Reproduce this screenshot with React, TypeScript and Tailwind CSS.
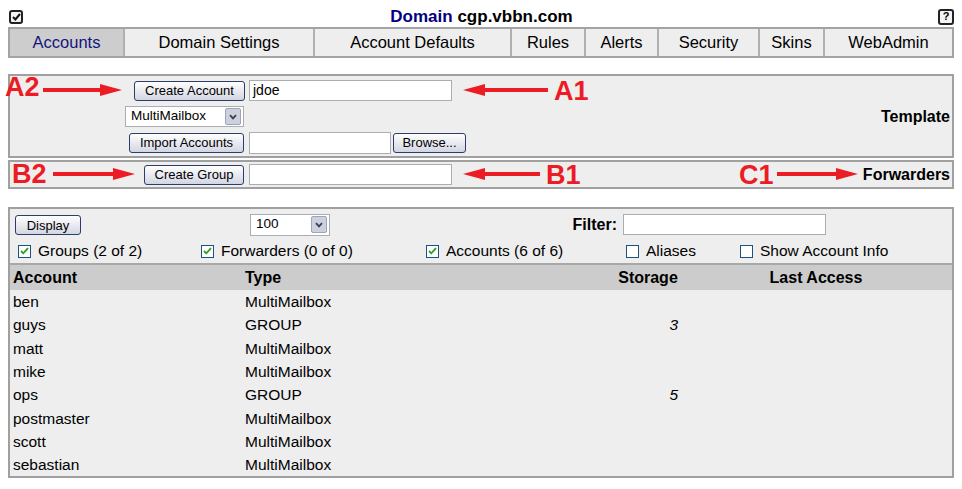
import React from 'react'

type Kid = { children?: React.ReactNode; className?: string }

const Btn = ({ children, className = '' }: Kid) => (
    <button className={`h-[20px] rounded-[3px] border border-[#2c3e66] bg-linear-to-b from-white to-[#d3d5e2] text-[13px] leading-none text-black ${className}`}>
        {children}
    </button>
)

const TextBox = ({ value = '', className = '' }: { value?: string; className?: string }) => (
    <div className={`h-[21px] border border-[#a9aeb5] bg-white px-[3px] text-[14px] leading-[19px] text-black ${className}`}>{value}</div>
)

const Select = ({ value, className = '' }: { value: string; className?: string }) => (
    <div className={`flex items-center justify-between border border-[#a9aeb5] bg-white pl-[5px] pr-[2px] text-[13.5px] ${className}`}>
        <span>{value}</span>
        <span className="flex h-[17px] w-[16px] items-center justify-center rounded-[2px] border border-[#9ea3b8] bg-[#cdd0dd]">
            <svg width="8" height="6" viewBox="0 0 8 6">
                <path d="M1 1.2 L4 4.4 L7 1.2" fill="none" stroke="#3b3f55" strokeWidth="1.8" />
            </svg>
        </span>
    </div>
)

const Check = ({ checked }: { checked?: boolean }) => (
    <span className="flex h-[13px] w-[13px] items-center justify-center border border-[#1c5180] bg-white">
        {checked && (
            <svg width="9" height="8" viewBox="0 0 9 8">
                <path d="M1 4 L3.3 6.3 L8 1.2" fill="none" stroke="#21a121" strokeWidth="1.8" />
            </svg>
        )}
    </span>
)

const CheckItem = ({ label, checked, w }: { label: string; checked?: boolean; w: string }) => (
    <div className={`flex items-center gap-[7px] ${w}`}>
        <Check checked={checked} />
        <span>{label}</span>
    </div>
)

// red annotation arrow, drawn over the panels
const Arrow = ({ left, top, width, dir }: { left: number; top: number; width: number; dir: 'l' | 'r' }) => {
    const pts = dir === 'r'
        ? `${width - 22},0 ${width},6 ${width - 22},12`
        : `22,0 0,6 22,12`
    return (
        <svg className="absolute" style={{ left, top }} width={width} height={12} viewBox={`0 0 ${width} 12`}>
            {dir === 'r'
                ? <rect x={0} y={4} width={width - 20} height={4} fill="#ec1c24" />
                : <rect x={20} y={4} width={width - 20} height={4} fill="#ec1c24" />}
            <polygon points={pts} fill="#ec1c24" />
        </svg>
    )
}

const Label = ({ text, left, top }: { text: string; left: number; top: number }) => (
    <span className="absolute text-[27px] font-black leading-[27px] text-[#ec1c24]" style={{ left, top }}>{text}</span>
)

const tabs = [
    { name: 'Accounts', w: 'w-[113px]' },
    { name: 'Domain Settings', w: 'w-[190px]' },
    { name: 'Account Defaults', w: 'w-[197px]' },
    { name: 'Rules', w: 'w-[74px]' },
    { name: 'Alerts', w: 'w-[73px]' },
    { name: 'Security', w: 'w-[101px]' },
    { name: 'Skins', w: 'w-[65px]' },
    { name: 'WebAdmin', w: 'flex-1' },
]

const rows = [
    { name: 'ben', type: 'MultiMailbox' },
    { name: 'guys', type: 'GROUP', storage: '3' },
    { name: 'matt', type: 'MultiMailbox' },
    { name: 'mike', type: 'MultiMailbox' },
    { name: 'ops', type: 'GROUP', storage: '5' },
    { name: 'postmaster', type: 'MultiMailbox' },
    { name: 'scott', type: 'MultiMailbox' },
    { name: 'sebastian', type: 'MultiMailbox' },
]

export default function App() {
    return (
        <div className="min-h-[489px] w-[962px] bg-white font-['Liberation_Sans',Arial,sans-serif] text-black">
            {/* title line */}
            <div className="grid h-[27px] grid-cols-[1fr_auto_1fr] items-center pl-[9px] pr-[8px] pt-[4px]">
                <span className="flex h-[14px] w-[14px] items-center justify-center rounded-[3px] border-2 border-[#222] bg-[#f4f4f4]">
                    <svg width="9" height="8" viewBox="0 0 9 8">
                        <path d="M1 4 L3.4 6.5 L8 1" fill="none" stroke="#111" strokeWidth="2" />
                    </svg>
                </span>
                <span className="text-[17px] font-bold">
                    <span className="text-[#000080]">Domain</span> cgp.vbbn.com
                </span>
                <span className="flex justify-end">
                    <span className="flex h-[16px] w-[16px] items-center justify-center rounded-[3px] border-2 border-[#222] bg-[#f4f4f4] text-[11px] font-bold leading-none">?</span>
                </span>
            </div>

            {/* tabs */}
            <div className="mx-[8px] flex h-[31px] border-2 border-[#a3a3a3] text-[16.5px]">
                {tabs.map((t, i) => (
                    <div
                        key={t.name}
                        className={`${t.w} flex items-center justify-center ${i ? 'border-l-2 border-[#b0b0b0]' : ''} ${i === 0 ? 'bg-[#cdcdcd] text-[#14147d]' : 'bg-[#eeeeee]'}`}
                    >
                        {t.name}
                    </div>
                ))}
            </div>

            <div className="relative mt-[16px]">
                {/* panel A */}
                <div className="mx-[8px] grid h-[84px] grid-cols-[235px_auto_1fr_auto] grid-rows-[21px_21px_21px] items-center gap-x-[4px] gap-y-[5px] border-2 border-[#a0a0a0] bg-[#eeeeee] pt-[4px] pr-[2px]">
                    <div className="flex justify-end"><Btn className="w-[111px]">Create Account</Btn></div>
                    <TextBox value="jdoe" className="w-[203px]" />
                    <div />
                    <div className="row-span-3 self-center text-[16px] font-bold">Template</div>

                    <div className="flex justify-end pr-[1px]"><Select value="MultiMailbox" className="h-[21px] w-[119px]" /></div>
                    <div />
                    <div />

                    <div className="flex justify-end pr-[1px]"><Btn className="w-[115px]">Import Accounts</Btn></div>
                    <div className="flex items-center gap-[2px]">
                        <TextBox className="w-[142px] h-[22px]" />
                        <Btn className="w-[73px]">Browse...</Btn>
                    </div>
                    <div />
                </div>

                {/* panel B */}
                <div className="mx-[8px] mt-[2px] grid h-[29px] grid-cols-[235px_auto_1fr_auto] items-center gap-x-[4px] border-2 border-[#a0a0a0] bg-[#eeeeee] pr-[2px]">
                    <div className="flex justify-end pr-[1px]"><Btn className="w-[100px]">Create Group</Btn></div>
                    <TextBox className="w-[203px]" />
                    <div />
                    <div className="text-[16px] font-bold">Forwarders</div>
                </div>

                {/* annotations */}
                <Label text="A2" left={5} top={0} />
                <Arrow left={43} top={10} width={79} dir="r" />
                <Arrow left={463} top={10} width={85} dir="l" />
                <Label text="A1" left={554} top={4} />
                <Label text="B2" left={12} top={87} />
                <Arrow left={53} top={94} width={82} dir="r" />
                <Arrow left={463} top={94} width={77} dir="l" />
                <Label text="B1" left={546} top={88} />
                <Label text="C1" left={739} top={88} />
                <Arrow left={777} top={94} width={81} dir="r" />
            </div>

            {/* account list */}
            <div className="mx-[8px] mt-[18px] border-2 border-[#a0a0a0] bg-[#eeeeee] text-[15.5px]">
                <div className="grid h-[30px] grid-cols-[240px_367px_auto] items-center pt-[1px]">
                    <div className="pl-[5px]"><Btn className="h-[19px] w-[66px] text-[13.5px]">Display</Btn></div>
                    <div className="flex items-center justify-between">
                        <Select value="100" className="h-[22px] w-[80px]" />
                        <span className="text-[16px] font-bold">Filter:</span>
                    </div>
                    <TextBox className="ml-[6px] w-[203px]" />
                </div>
                <div className="flex h-[24px] items-center pl-[8px]">
                    <CheckItem label="Groups (2 of 2)" checked w="w-[183px]" />
                    <CheckItem label="Forwarders (0 of 0)" checked w="w-[225px]" />
                    <CheckItem label="Accounts (6 of 6)" checked w="w-[200px]" />
                    <CheckItem label="Aliases" w="w-[114px]" />
                    <CheckItem label="Show Account Info" w="" />
                </div>
                <div className="grid h-[27px] grid-cols-[232px_358px_96px_240px_1fr] items-center border-t-2 border-[#a8a8a8] bg-[#cccccc] text-[16px] font-bold">
                    <div className="pl-[3px]">Account</div>
                    <div className="pl-[3px]">Type</div>
                    <div className="text-center">Storage</div>
                    <div className="text-center">Last Access</div>
                    <div />
                </div>
                {rows.map(r => (
                    <div key={r.name} className="grid h-[23.3px] grid-cols-[232px_358px_96px_240px_1fr] items-center">
                        <div className="pl-[3px]">{r.name}</div>
                        <div className="pl-[3px]">{r.type}</div>
                        <div className="pr-[18px] text-right italic">{r.storage}</div>
                        <div />
                        <div />
                    </div>
                ))}
            </div>
        </div>
    )
}
